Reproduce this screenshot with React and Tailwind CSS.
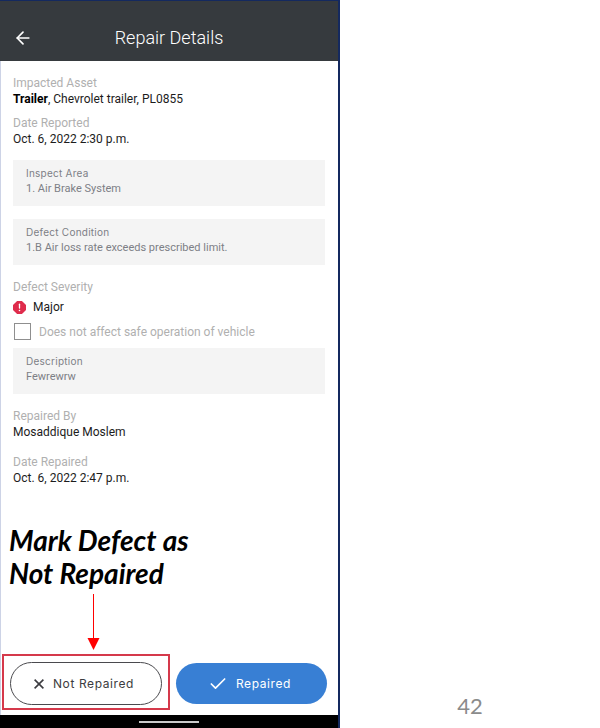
import { ArrowLeft, Check } from "lucide-react";

function Field({ label, children }) {
  return (
    <div className="text-xs">
      <dt className="leading-4 text-[#b0b0b0]">{label}</dt>
      <dd className="leading-[17px] text-[#1c1c1c]">{children}</dd>
    </div>
  );
}

function InfoBox({ label, children }) {
  return (
    <dl className="bg-[#f4f4f4] px-[13px] pt-[5px] pb-[9px] text-[#7d7f86]">
      <dt className="font-['Inter',sans-serif] text-[10px] leading-4 tracking-wide">{label}</dt>
      <dd className="text-[11px] leading-4">{children}</dd>
    </dl>
  );
}

function MajorIcon() {
  return (
    <svg viewBox="0 0 24 24" className="size-[13px]" aria-hidden="true">
      <path d="M7.5 0h9L24 7.5v9L16.500 24h-9L0 16.500v-9z" fill="#df2c4c" />
      <path d="M12 6v7" stroke="#fff" strokeWidth="2.4" strokeLinecap="round" />
      <circle cx="12" cy="17.5" r="1.5" fill="#fff" />
    </svg>
  );
}

function CrossIcon() {
  return (
    <svg viewBox="0 0 10 10" className="size-[10px]" aria-hidden="true">
      <path d="M0.600 0.600l8.800 8.800M9.400 0.600l-8.800 8.800" stroke="currentColor" strokeWidth="1.6" />
    </svg>
  );
}

export default function App() {
  return (
    <div className="grid min-h-screen grid-cols-[17fr_13fr] bg-white font-['Roboto',sans-serif]">
      <div className="flex flex-col border-t border-r-2 border-[#14295f]">
        <header className="grid h-[60px] grid-cols-[1fr_auto_1fr] items-center bg-[#363a3e] px-[13px] pt-[14px] text-white">
          <button aria-label="Back" className="justify-self-start">
            <ArrowLeft size={20} strokeWidth={2} />
          </button>
          <h1 className="text-lg leading-6 font-light">Repair Details</h1>
        </header>

        <main className="flex flex-1 flex-col border-l border-[#cdd3e6] pt-[14px]">
          <div className="flex flex-col pr-[13px] pl-3">
            <dl className="flex flex-col gap-[7px]">
              <Field label="Impacted Asset">
                <strong className="font-bold text-black">Trailer</strong>, Chevrolet trailer, PL0855
              </Field>
              <Field label="Date Reported">Oct. 6, 2022 2:30 p.m.</Field>
            </dl>

            <div className="mt-3 flex flex-col gap-[13px]">
              <InfoBox label="Inspect Area">1. Air Brake System</InfoBox>
              <InfoBox label="Defect Condition">1.B Air loss rate exceeds prescribed limit.</InfoBox>
            </div>

            <h2 className="mt-[14px] text-xs leading-4 text-[#b0b0b0]">Defect Severity</h2>
            <p className="mt-1 flex items-center gap-[7px] text-xs leading-4 text-[#1c1c1c]">
              <MajorIcon />
              Major
            </p>
            <label className="mt-2 mb-2 flex items-center gap-2 pl-px text-xs leading-4 text-[#b0b0b0]">
              <input
                type="checkbox"
                className="size-[17px] appearance-none border border-[#8f8f8f] bg-white"
              />
              Does not affect safe operation of vehicle
            </label>
            <InfoBox label="Description">Fewrewrw</InfoBox>

            <dl className="mt-[14px] flex flex-col gap-[13px]">
              <Field label="Repaired By">Mosaddique Moslem</Field>
              <Field label="Date Repaired">Oct. 6, 2022 2:47 p.m.</Field>
            </dl>
          </div>

          <div className="mt-auto pl-2">
            <p className="font-['Lato',sans-serif] text-[28px] leading-[33px] font-bold text-black italic">
              Mark Defect as
              <br />
              Not Repaired
            </p>
            <svg viewBox="0 0 13 56" className="mt-1 ml-[78px] h-14 w-[13px]" aria-hidden="true">
              <rect x="6" y="0" width="1" height="46" fill="#ff0000" />
              <path d="M0.500 44h12l-6 12z" fill="#ff0000" />
            </svg>
          </div>

          <div className="mt-1 mb-[5px] grid grid-cols-[168fr_151fr] items-end gap-[6px] pr-[11px] pl-px">
            <div className="border-2 border-[#d5394b] px-[6px] pt-[6px] pb-[3px]">
              <button className="flex h-[43px] w-full items-center justify-center gap-[9px] rounded-full border border-[#4a4a4e] bg-white pr-1 font-['Inter',sans-serif] text-xs tracking-wider text-[#3c3c40]">
                <CrossIcon />
                Not Repaired
              </button>
            </div>
            <button className="mb-[6px] flex h-[41px] items-center justify-center gap-2 rounded-full bg-[#387fd4] pr-1 font-['Inter',sans-serif] text-xs tracking-wider text-white">
              <Check size={20} strokeWidth={2} />
              Repaired
            </button>
          </div>
        </main>

        <div className="flex h-[13px] items-center justify-center bg-black">
          <div className="h-[2px] w-[60px] bg-[#c9c9c9]" />
        </div>
      </div>

      <footer className="self-end pb-2 text-center font-['Lato',sans-serif] text-[22px] leading-7 text-[#8b8b8b]">
        42
      </footer>
    </div>
  );
}
